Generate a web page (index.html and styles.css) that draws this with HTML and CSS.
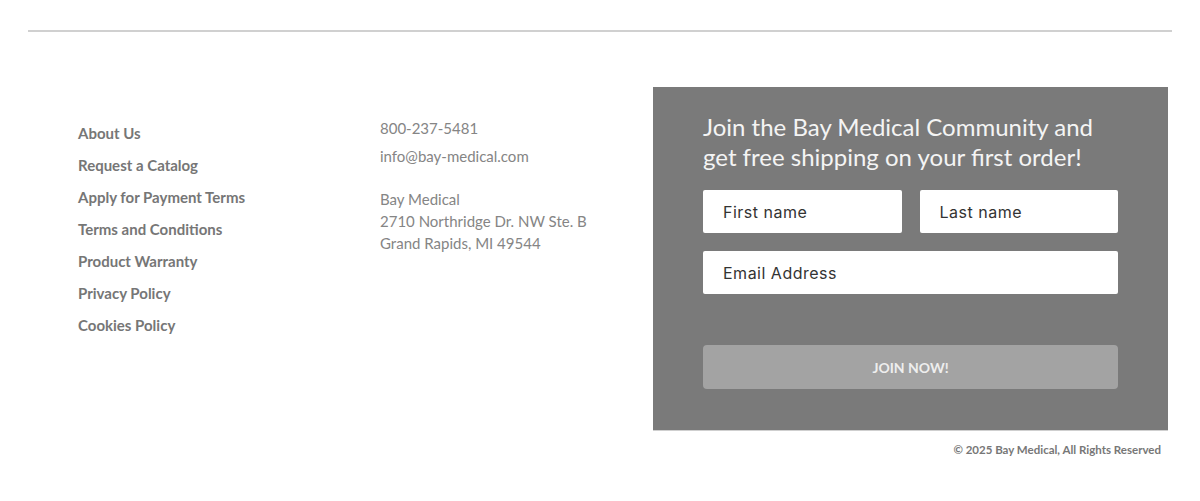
FILE: index.html
```html
<!DOCTYPE html>
<html lang="en">

<head>
    <meta charset="UTF-8">
    <meta name="viewport" content="width=device-width, initial-scale=1.0">
    <title>Bay Medical</title>
    <link rel="stylesheet" href="styles.css">
</head>

<body>
    <div class="rule"></div>

    <footer class="footer">
        <ul class="footer-links">
            <li><a href="#">About Us</a></li>
            <li><a href="#">Request a Catalog</a></li>
            <li><a href="#">Apply for Payment Terms</a></li>
            <li><a href="#">Terms and Conditions</a></li>
            <li><a href="#">Product Warranty</a></li>
            <li><a href="#">Privacy Policy</a></li>
            <li><a href="#">Cookies Policy</a></li>
        </ul>

        <div class="footer-contact">
            <p class="contact-line">800-237-5481</p>
            <p class="contact-line">info@bay-medical.com</p>
            <p class="address">
                Bay Medical<br>
                2710 Northridge Dr. NW Ste. B<br>
                Grand Rapids, MI 49544
            </p>
        </div>

        <div class="signup-wrap">
            <form class="signup">
                <h3 class="signup-title">Join the Bay Medical Community and<br>get free shipping on your first order!</h3>
                <div class="name-row">
                    <input type="text" placeholder="First name">
                    <input type="text" placeholder="Last name">
                </div>
                <input class="email" type="email" placeholder="Email Address">
                <button type="button" class="join-btn">JOIN NOW!</button>
            </form>
            <p class="copyright">&copy; 2025 Bay Medical, All Rights Reserved</p>
        </div>
    </footer>
</body>

</html>
```

FILE: styles.css
```css
* {
    margin: 0;
    padding: 0;
    box-sizing: border-box;
}

body {
    background-color: #fff;
    font-family: Lato, "Open Sans", sans-serif;
}

ul,
li {
    list-style: none;
}

.rule {
    margin: 30px 28px 0;
    border-top: 2px solid #d0d0d0;
}

.footer {
    display: flex;
    margin-top: 55px;
    padding-left: 78px;
}

/* left column of links */
.footer-links {
    width: 302px;
    padding-top: 30px;
}

.footer-links li {
    font-size: 15px;
    line-height: 32px;
}

.footer-links a {
    color: #767676;
    font-weight: bold;
    text-decoration: none;
}

/* phone, mail, address */
.footer-contact {
    width: 273px;
    padding-top: 27px;
    color: #858585;
    font-size: 15px;
}

.contact-line {
    line-height: 28px;
}

.address {
    margin-top: 18px;
    line-height: 22px;
}

.signup-wrap {
    width: 515px;
}

.signup {
    padding: 25px 50px 41px;
    background-color: #7a7a7a;
    border-bottom: 1px solid #cfcfcf;
}

.signup-title {
    color: #f4f4f4;
    font-size: 24px;
    font-weight: normal;
    line-height: 30px;
    white-space: nowrap;
}

.name-row {
    display: grid;
    grid-template-columns: 1fr 1fr;
    gap: 18px;
    margin-top: 18px;
}

.signup input {
    display: block;
    width: 100%;
    height: 43px;
    padding: 0 20px;
    border: none;
    border-radius: 2px;
    background-color: #fff;
    font-family: Inter, "Noto Sans", sans-serif;
    font-size: 16px;
    letter-spacing: 0.5px;
}

.signup input::placeholder {
    color: #333;
}

.signup .email {
    margin-top: 18px;
}

.join-btn {
    display: block;
    width: 100%;
    height: 44px;
    margin-top: 51px;
    border: none;
    border-radius: 4px;
    background-color: #a3a3a3;
    color: #eee;
    font-family: Lato, "Open Sans", sans-serif;
    font-size: 14px;
    font-weight: bold;
}

.copyright {
    padding: 12px 7px 0 0;
    text-align: right;
    color: #777;
    font-size: 11.5px;
    font-weight: bold;
}
```
